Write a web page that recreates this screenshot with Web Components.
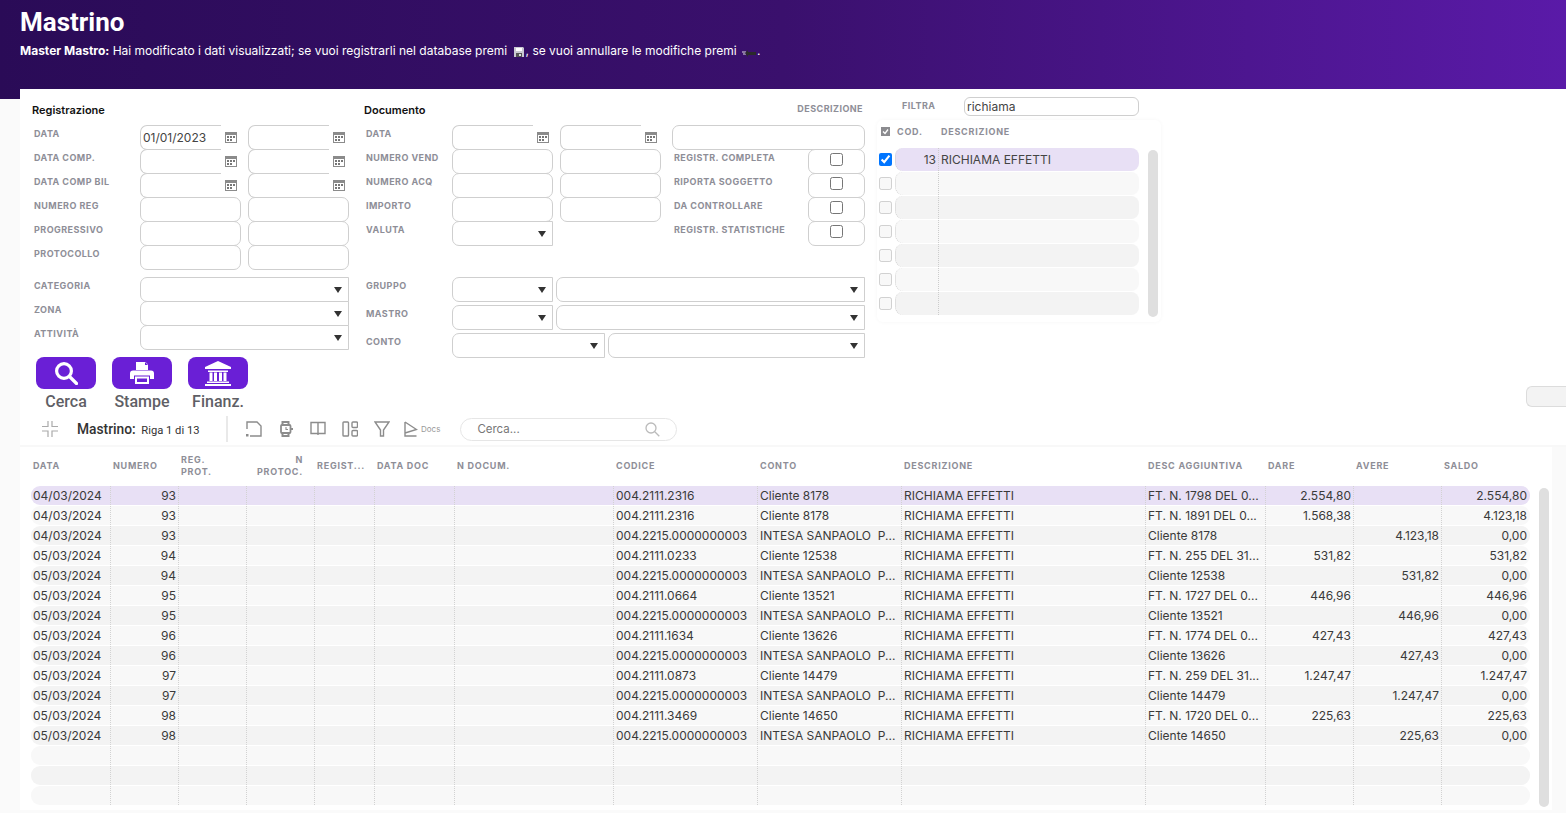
<!DOCTYPE html>
<html lang="it">
<head>
<meta charset="utf-8">
<title>Mastrino</title>
<style>
  html, body { margin: 0; height: 100%; overflow: hidden; }
  body { background: #fafafa; font-family: Inter, "Liberation Sans", sans-serif; color: #3a3a3a; }
</style>
</head>
<body>
<mastro-header>
  <span slot="title">Mastrino</span>
  <b>Master Mastro:</b> Hai modificato i dati visualizzati; se vuoi registrarli nel database premi
  <svg width="10" height="10" viewBox="0 0 10 10" style="margin:0 2px 0 3px;vertical-align:-2px"><path d="M0 0h9l1 1v9H0z" fill="#c9c9d2"/><path d="M2 1h6v3H2z" fill="#fff"/><path d="M2 6h6v4H2z" fill="#555"/><path d="M5 7h2v2H5z" fill="#ddd"/></svg>, se vuoi annullare le modifiche premi
  <svg width="14" height="8" viewBox="0 0 14 8" style="margin:0 1px 0 2px;vertical-align:-2px"><path d="M0 3h4M1 5h3" stroke="#ddd" stroke-width="1"/><path d="M3 4l3-3v2h8v3H6v2z" fill="#2b2b2b"/></svg>.
</mastro-header>

<form-panel>
  <form-section heading="Registrazione" style="width:332px">
    <form-row label="DATA" label-width="108"><date-field value="01/01/2023"></date-field><date-field></date-field></form-row>
    <form-row label="DATA COMP." label-width="108"><date-field></date-field><date-field></date-field></form-row>
    <form-row label="DATA COMP BIL" label-width="108"><date-field></date-field><date-field></date-field></form-row>
    <form-row label="NUMERO REG" label-width="108"><text-field></text-field><text-field></text-field></form-row>
    <form-row label="PROGRESSIVO" label-width="108"><text-field></text-field><text-field></text-field></form-row>
    <form-row label="PROTOCOLLO" label-width="108"><text-field></text-field><text-field></text-field></form-row>
    <form-row label="CATEGORIA" label-width="108" style="margin-top:8px"><select-field w="209"></select-field></form-row>
    <form-row label="ZONA" label-width="108"><select-field w="209"></select-field></form-row>
    <form-row label="ATTIVITÀ" label-width="108"><select-field w="209"></select-field></form-row>
    <action-bar>
      <action-button label="Cerca">
        <svg width="24" height="24" viewBox="0 0 24 24" fill="none" stroke="#fff" stroke-width="3.2"><circle cx="10" cy="10" r="7.4"/><path d="M15.5 15.5l7 7" stroke-linecap="round"/></svg>
      </action-button>
      <action-button label="Stampe">
        <svg width="24" height="22" viewBox="0 0 24 22" fill="#fff"><path d="M6 0h9.5L18 2.5V8H6z"/><path d="M15 0v3h3z" fill="#6a1fd6"/><path d="M3 8.5h18a3 3 0 0 1 3 3V17H20v-3.5H4V17H0v-5.5a3 3 0 0 1 3-3z"/><path d="M5 14.5h14V22H5zM7 16.5V20h10v-3.5z" fill-rule="evenodd"/></svg>
      </action-button>
      <action-button label="Finanz.">
        <svg width="26" height="25" viewBox="0 0 26 25" fill="#fff"><path d="M13 0l13 6v2H0V6z"/><path d="M3 9.500h20V11H3zM4.500 11.500h3V20h-3zM9 11.500h3V20H9zM14 11.500h3V20h-3zM18.500 11.500h3V20h-3zM2 20.500h22V22H2zM0 23h26v2H0z"/></svg>
      </action-button>
    </action-bar>
  </form-section>

  <form-section heading="Documento" style="width:513px">
    <span slot="aside">DESCRIZIONE</span>
    <form-row label="DATA" label-width="88"><date-field></date-field><date-field></date-field><text-field w="193" style="margin-left:4px"></text-field></form-row>
    <form-row label="NUMERO VEND" label-width="88"><text-field></text-field><text-field></text-field><check-field label="REGISTR. COMPLETA" style="margin-left:4px"></check-field></form-row>
    <form-row label="NUMERO ACQ" label-width="88"><text-field></text-field><text-field></text-field><check-field label="RIPORTA SOGGETTO" style="margin-left:4px"></check-field></form-row>
    <form-row label="IMPORTO" label-width="88"><text-field></text-field><text-field></text-field><check-field label="DA CONTROLLARE" style="margin-left:4px"></check-field></form-row>
    <form-row label="VALUTA" label-width="88"><select-field></select-field><check-field label="REGISTR. STATISTICHE" style="margin-left:112px"></check-field></form-row>
    <form-row label="GRUPPO" label-width="88" style="margin-top:32px;--gap:3px;--pitch:28px"><select-field></select-field><select-field w="309"></select-field></form-row>
    <form-row label="MASTRO" label-width="88" style="--gap:3px;--pitch:28px"><select-field></select-field><select-field w="309"></select-field></form-row>
    <form-row label="CONTO" label-width="88" style="--gap:3px;--pitch:28px"><select-field w="153"></select-field><select-field w="257"></select-field></form-row>
  </form-section>

  <filter-list value="richiama"></filter-list>
  <side-tab></side-tab>
</form-panel>

<grid-toolbar></grid-toolbar>
<data-grid></data-grid>

<script>
const labelCss = `font: 700 9px Inter, "Liberation Sans", sans-serif; letter-spacing: .45px; color: #8e8e97;`;
const headCss = `font: 700 9px Inter, "Liberation Sans", sans-serif; letter-spacing: .75px; color: #8e8e97;`;

const headerTemplate = document.createElement("template");
headerTemplate.innerHTML = /* html */ `
  <style>
    :host {
      display: block;
      box-sizing: border-box;
      height: 99px;
      padding: 7px 0 0 20px;
      color: #fff;
      background: linear-gradient(90deg, #2a0b57 0%, #3a106d 50%, #5a1aa8 100%);
    }
    .title { font: 700 26px/30px Roboto, sans-serif; }
    .msg { margin-top: 6px; font: 400 12px/15px Inter, sans-serif; white-space: nowrap; }
  </style>
  <div class="title"><slot name="title"></slot></div>
  <div class="msg"><slot></slot></div>
`;
class MastroHeader extends HTMLElement {
  connectedCallback() {
    this.attachShadow({ mode: "open" }).appendChild(headerTemplate.content.cloneNode(true));
  }
}

const panelTemplate = document.createElement("template");
panelTemplate.innerHTML = /* html */ `
  <style>
    :host {
      display: flex;
      box-sizing: border-box;
      height: 326px;
      margin: -10px 0 0 20px;
      padding: 8px 0 0 12px;
      background: #fff;
    }
  </style>
  <slot></slot>
`;
class FormPanel extends HTMLElement {
  connectedCallback() {
    this.attachShadow({ mode: "open" }).appendChild(panelTemplate.content.cloneNode(true));
  }
}

class FormSection extends HTMLElement {
  connectedCallback() {
    this.attachShadow({ mode: "open" }).innerHTML = /* html */ `
      <style>
        :host { display: block; flex: none; box-sizing: border-box; padding-top: 6px; }
        .head { display: flex; justify-content: space-between; height: 14px; margin-bottom: 8px; }
        h2 { margin: 0; font: 600 11px/14px Inter, sans-serif; color: #111; }
        .aside { ${labelCss} line-height: 10px; padding: 1px 14px 0 0; }
      </style>
      <div class="head"><h2>${this.getAttribute("heading")}</h2><div class="aside"><slot name="aside"></slot></div></div>
      <slot></slot>
    `;
  }
}

class FormRow extends HTMLElement {
  connectedCallback() {
    this.attachShadow({ mode: "open" }).innerHTML = /* html */ `
      <style>
        :host { display: flex; align-items: flex-start; gap: var(--gap, 7px); height: var(--pitch, 24px); }
        .label {
          ${labelCss}
          flex: none;
          box-sizing: border-box;
          width: ${this.getAttribute("label-width")}px;
          margin-right: calc(var(--gap, 7px) * -1);
          padding: 3px 0 0 2px;
          line-height: 11px;
        }
      </style>
      <div class="label">${this.getAttribute("label")}</div>
      <slot></slot>
    `;
  }
}

const fieldCss = `
  box-sizing: border-box;
  height: 25px;
  border: 1px solid #cfcfcf;
  background: #fff;
  font: 400 12px/23px Inter, sans-serif;
  color: #444;
  padding-left: 2px;
`;

class TextField extends HTMLElement {
  connectedCallback() {
    const w = this.getAttribute("w") || 101;
    this.attachShadow({ mode: "open" }).innerHTML = /* html */ `
      <style>
        :host { display: block; flex: none; width: ${w}px; }
        div { ${fieldCss} border-radius: 7px; }
      </style>
      <div></div>
    `;
  }
}

class DateField extends HTMLElement {
  connectedCallback() {
    this.attachShadow({ mode: "open" }).innerHTML = /* html */ `
      <style>
        :host { display: flex; flex: none; width: 101px; }
        .box { ${fieldCss} width: 81px; border-right: 0; border-radius: 7px 0 0 7px; }
        svg { margin: 7px 0 0 4px; }
      </style>
      <div class="box">${this.getAttribute("value") || ""}</div>
      <svg width="12" height="11" viewBox="0 0 12 11">
        <path d="M0 0h12v11H0z" fill="#8b8b8b"/>
        <path d="M1 3h10v7H1z" fill="#fff"/>
        <path d="M2 4h2v2H2zM5 4h2v2H5zM8 4h2v2H8zM2 7h2v2H2zM5 7h2v2H5z" fill="#777"/>
      </svg>
    `;
  }
}

class SelectField extends HTMLElement {
  connectedCallback() {
    const w = this.getAttribute("w") || 101;
    this.attachShadow({ mode: "open" }).innerHTML = /* html */ `
      <style>
        :host { display: block; flex: none; width: ${w}px; }
        .box { ${fieldCss} display: flex; justify-content: flex-end; align-items: center; padding-right: 6px; border-radius: 7px 0 0 7px; }
        i { width: 0; height: 0; border: 4px solid transparent; border-top: 6px solid #333; border-bottom: 0; }
      </style>
      <div class="box"><i></i></div>
    `;
  }
}

class CheckField extends HTMLElement {
  connectedCallback() {
    this.attachShadow({ mode: "open" }).innerHTML = /* html */ `
      <style>
        :host { display: flex; flex: none; width: 193px; }
        .label { ${labelCss} box-sizing: border-box; width: 136px; padding: 3px 0 0 2px; line-height: 11px; }
        .box { ${fieldCss} display: flex; justify-content: center; align-items: flex-start; width: 57px; padding: 3px 0 0; border-radius: 7px; }
        input { margin: 0; width: 13px; height: 13px; }
      </style>
      <div class="label">${this.getAttribute("label")}</div>
      <div class="box"><input type="checkbox"></div>
    `;
  }
}

const actionBarTemplate = document.createElement("template");
actionBarTemplate.innerHTML = `
  <style>:host { display: flex; gap: 16px; margin: 8px 0 0 4px; }</style>
  <slot></slot>
`;
class ActionBar extends HTMLElement {
  connectedCallback() {
    this.attachShadow({ mode: "open" }).appendChild(actionBarTemplate.content.cloneNode(true));
  }
}

class ActionButton extends HTMLElement {
  connectedCallback() {
    this.attachShadow({ mode: "open" }).innerHTML = /* html */ `
      <style>
        :host { display: block; width: 60px; }
        .btn { display: flex; justify-content: center; align-items: center; height: 32px; border-radius: 8px; background: #6a1fd6; }
        .txt { margin-top: 4px; text-align: center; font: 500 16px/18px Roboto, sans-serif; color: #5f5f66; white-space: nowrap; }
      </style>
      <div class="btn"><slot></slot></div>
      <div class="txt">${this.getAttribute("label")}</div>
    `;
  }
}

class FilterList extends HTMLElement {
  connectedCallback() {
    const rows = Array.from({ length: 7 }, (_, i) => /* html */ `
      <div class="line">
        <input type="checkbox" ${i ? "disabled" : "checked"}>
        <div class="row ${i ? (i % 2 ? "odd" : "even") : "sel"}">
          <span class="cod">${i ? "" : "13"}</span><span class="desc">${i ? "" : "RICHIAMA EFFETTI"}</span>
        </div>
      </div>`).join("");
    this.attachShadow({ mode: "open" }).innerHTML = /* html */ `
      <style>
        :host { display: block; flex: none; width: 284px; }
        .filter { display: flex; margin-left: 25px; height: 19px; }
        .filter label { ${labelCss} width: 62px; line-height: 17px; }
        .filter div { box-sizing: border-box; width: 175px; height: 19px; border: 1px solid #cfcfcf; border-radius: 6px; padding-left: 2px; font: 400 12px/18px Inter, sans-serif; color: #444; }
        .card { display: flex; height: 202px; margin-top: 4px; border-radius: 6px; box-shadow: 0 0 4px rgba(0,0,0,.04); }
        .list { width: 262px; }
        .head { display: flex; align-items: center; height: 23px; padding-left: 4px; }
        .head i { display: flex; justify-content: center; align-items: center; width: 9px; height: 9px; margin-right: 7px; background: #8b8b8f; }
        .head span { ${headCss} }
        .head span:nth-of-type(1) { width: 44px; }
        .rows { margin-top: 5px; }
        .line { display: flex; align-items: flex-start; height: 24px; padding-left: 2px; }
        .line input { margin: 5px 3px 0 0; width: 13px; height: 13px; flex: none; }
        .row { display: flex; box-sizing: border-box; width: 244px; height: 23px; border-radius: 8px; font: 400 12px/23px Inter, sans-serif; color: #444; border-left: 1px dotted #ccc; }
        .cod { box-sizing: border-box; width: 43px; padding-right: 2px; text-align: right; border-right: 1px dotted #ccc; }
        .desc { padding-left: 2px; }
        .sel { background: #e8e0f5; }
        .odd { background: #f8f8f8; }
        .even { background: #f3f3f3; }
        .bar { width: 10px; height: 167px; margin: 30px 0 0 9px; border-radius: 5px; background: #dfdfdf; }
      </style>
      <div class="filter"><label>FILTRA</label><div>${this.getAttribute("value")}</div></div>
      <div class="card">
        <div class="list">
          <div class="head"><i><svg width="7" height="7" viewBox="0 0 7 7" fill="none" stroke="#fff" stroke-width="1.300"><path d="M1 3.500l2 2 3-4"/></svg></i><span>COD.</span><span>DESCRIZIONE</span></div>
          <div class="rows">${rows}</div>
        </div>
        <div class="bar"></div>
      </div>
    `;
  }
}

class SideTab extends HTMLElement {
  connectedCallback() {
    this.attachShadow({ mode: "open" }).innerHTML = /* html */ `
      <style>
        :host { display: block; flex: none; box-sizing: border-box; width: 40px; height: 21px; margin: auto 0 8px auto; border: 1px solid #dcdcdc; border-right: 0; border-radius: 6px 0 0 6px; background: #f3f3f3; }
      </style>
    `;
  }
}

class GridToolbar extends HTMLElement {
  connectedCallback() {
    const stroke = `fill="none" stroke="#8c8c8c" stroke-width="1.4"`;
    this.attachShadow({ mode: "open" }).innerHTML = /* html */ `
      <style>
        :host { display: flex; align-items: center; box-sizing: border-box; height: 32px; margin-left: 20px; padding: 0 0 2px 22px; background: #fff; border-bottom: 2px solid #f8f8f8; font-family: Roboto, sans-serif; }
        .title { width: 149px; margin-left: 19px; font-size: 11.2px; color: #333; white-space: nowrap; }
        .title b { font-weight: 500; font-size: 13.800px; }
        .sep { width: 2px; height: 26px; background: #e9e9e9; }
        .tools { display: flex; margin-left: 10px; }
        .tool { display: flex; justify-content: center; width: 32px; }
        .docs { display: flex; align-items: center; margin-left: 6px; font: 400 8px Inter, sans-serif; color: #999; }
        .docs svg { margin-right: 3px; }
        .search { display: flex; align-items: center; justify-content: space-between; box-sizing: border-box; width: 217px; height: 23px; margin-left: 20px; padding: 0 16px; border: 1px solid #e6e6e6; border-radius: 12px; font: 400 11.500px Inter, sans-serif; color: #777; }
      </style>
      <svg width="16" height="16" viewBox="0 0 16 16" fill="none" stroke="#aaa" stroke-width="1.2"><path d="M0 5.500h6V0M16 5.500H10V0M0 10h6v6M16 10H10v6"/></svg>
      <div class="title"><b>Mastrino:</b>&nbsp; Riga 1 di 13</div>
      <div class="sep"></div>
      <div class="tools">
        <div class="tool"><svg width="16" height="16" viewBox="0 0 16 16" ${stroke}><path d="M1 8V1h10l4 4v10H4"/><path d="M0 13h2.500v2.500H0z" fill="#8c8c8c" stroke="none"/></svg></div>
        <div class="tool"><svg width="14" height="16" viewBox="0 0 14 16" ${stroke}><path d="M3.500 4V1h6v3M3.500 12v3h6v-3" stroke-width="2"/><rect x="2" y="4" width="9.500" height="8" rx="1" stroke-width="1.800"/><path d="M7 6v2.500h2" stroke-width="1.100"/><path d="M12 7h2v2h-2z" fill="#8c8c8c" stroke="none"/></svg></div>
        <div class="tool"><svg width="16" height="15" viewBox="0 0 16 15" ${stroke}><path d="M1 1.500h14V12.500H1zM8 1v13"/></svg></div>
        <div class="tool"><svg width="16" height="16" viewBox="0 0 16 16" ${stroke}><rect x="1" y="1" width="5.500" height="14" rx=".8"/><rect x="10" y="1" width="5.500" height="5.500" rx="1"/><rect x="10" y="9.500" width="5.500" height="5.500" rx="1"/></svg></div>
        <div class="tool"><svg width="16" height="16" viewBox="0 0 16 16" ${stroke}><path d="M1 1h14L9.500 9v6h-3V9z"/></svg></div>
        <div class="docs"><svg width="14" height="16" viewBox="0 0 14 16" ${stroke}><path d="M1 1v14h11.500M1 1l11.500 7.500L1 12"/></svg>Docs</div>
      </div>
      <div class="search"><span>Cerca...</span><svg width="15" height="15" viewBox="0 0 15 15" fill="none" stroke="#bbb" stroke-width="1.300"><circle cx="6" cy="6" r="5"/><path d="M9.800 9.800l4.500 4.500"/></svg></div>
    `;
  }
}

const columns = [
  ["DATA", 79], ["NUMERO", 68, "num"], ["REG.<br>PROT.", 68], ["N<br>PROTOC.", 68, "head-right"],
  ["REGIST...", 60], ["DATA DOC", 80], ["N DOCUM.", 159], ["CODICE", 144], ["CONTO", 144],
  ["DESCRIZIONE", 244], ["DESC AGGIUNTIVA", 120], ["DARE", 88, "num"], ["AVERE", 88, "num"], ["SALDO", 89, "num"]
];
const cols = columns.map(c => c[1] + "px").join(" ");
const BANK = "004.2215.0000000003", INTESA = "INTESA SANPAOLO  P...", RE = "RICHIAMA EFFETTI";
const movements = [
  ["04/03/2024", "93", "004.2111.2316", "Cliente 8178", "FT. N. 1798 DEL 0...", "2.554,80", "", "2.554,80"],
  ["04/03/2024", "93", "004.2111.2316", "Cliente 8178", "FT. N. 1891 DEL 0...", "1.568,38", "", "4.123,18"],
  ["04/03/2024", "93", BANK, INTESA, "Cliente 8178", "", "4.123,18", "0,00"],
  ["05/03/2024", "94", "004.2111.0233", "Cliente 12538", "FT. N. 255 DEL 31...", "531,82", "", "531,82"],
  ["05/03/2024", "94", BANK, INTESA, "Cliente 12538", "", "531,82", "0,00"],
  ["05/03/2024", "95", "004.2111.0664", "Cliente 13521", "FT. N. 1727 DEL 0...", "446,96", "", "446,96"],
  ["05/03/2024", "95", BANK, INTESA, "Cliente 13521", "", "446,96", "0,00"],
  ["05/03/2024", "96", "004.2111.1634", "Cliente 13626", "FT. N. 1774 DEL 0...", "427,43", "", "427,43"],
  ["05/03/2024", "96", BANK, INTESA, "Cliente 13626", "", "427,43", "0,00"],
  ["05/03/2024", "97", "004.2111.0873", "Cliente 14479", "FT. N. 259 DEL 31...", "1.247,47", "", "1.247,47"],
  ["05/03/2024", "97", BANK, INTESA, "Cliente 14479", "", "1.247,47", "0,00"],
  ["05/03/2024", "98", "004.2111.3469", "Cliente 14650", "FT. N. 1720 DEL 0...", "225,63", "", "225,63"],
  ["05/03/2024", "98", BANK, INTESA, "Cliente 14650", "", "225,63", "0,00"]
];

class DataGrid extends HTMLElement {
  connectedCallback() {
    const head = columns.map(c => `<div class="hc ${c[2] === "head-right" ? "right" : ""}"><span>${c[0]}</span></div>`).join("");
    const rows = [];
    for (let i = 0; i < 16; i++) {
      const m = movements[i];
      const v = m ? [m[0], m[1], "", "", "", "", "", m[2], m[3], RE, m[4], m[5], m[6], m[7]] : Array(14).fill("");
      const cells = v.map((t, k) => `<div class="c ${columns[k][2] === "num" ? "num" : ""}">${t}</div>`).join("");
      rows.push(`<div class="row ${i === 0 ? "sel" : i % 2 ? "odd" : "even"}">${cells}</div>`);
    }
    this.attachShadow({ mode: "open" }).innerHTML = /* html */ `
      <style>
        :host { display: flex; box-sizing: border-box; height: 363px; margin: 0 14px 0 20px; padding: 3px 0 0 11px; background: #fff; }
        .table { width: 1499px; flex: none; }
        .head, .row { display: grid; grid-template-columns: ${cols}; }
        .head { box-sizing: border-box; height: 30px; padding-top: 1px; margin-bottom: 6px; align-items: center; }
        .hc { ${headCss} line-height: 12px; padding: 0 3px; white-space: nowrap; }
        .hc:first-child { padding-left: 2px; }
        .right { text-align: right; padding-right: 11px; }
        .row { height: 19px; margin-bottom: 1px; border-radius: 9px; font: 400 12px/19px Inter, sans-serif; color: #3a3a3a; }
        .c { padding: 0 2px 0 2px; white-space: pre; overflow: hidden; border-left: 1px dotted #d2d2d2; }
        .c:first-child { border-left: 0; padding-left: 2px; }
        .c:last-child { padding-right: 3px; }
        .num { text-align: right; }
        .sel { background: #e8e0f5; }
        .odd { background: #f8f8f8; }
        .even { background: #f3f3f3; }
        .bar { flex: none; width: 10px; height: 319px; margin: 38px 0 0 9px; border-radius: 5px; background: #dfdfdf; }
      </style>
      <div class="table"><div class="head">${head}</div>${rows.join("")}</div>
      <div class="bar"></div>
    `;
  }
}

customElements.define("mastro-header", MastroHeader);
customElements.define("form-panel", FormPanel);
customElements.define("form-section", FormSection);
customElements.define("form-row", FormRow);
customElements.define("text-field", TextField);
customElements.define("date-field", DateField);
customElements.define("select-field", SelectField);
customElements.define("check-field", CheckField);
customElements.define("action-bar", ActionBar);
customElements.define("action-button", ActionButton);
customElements.define("filter-list", FilterList);
customElements.define("side-tab", SideTab);
customElements.define("grid-toolbar", GridToolbar);
customElements.define("data-grid", DataGrid);
</script>
</body>
</html>
